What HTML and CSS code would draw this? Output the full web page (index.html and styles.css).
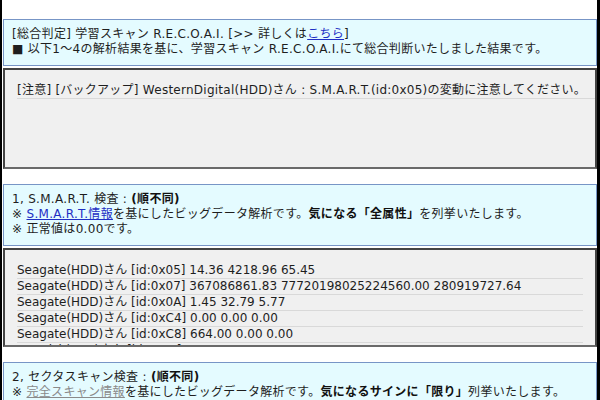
FILE: index.html
```html
<!DOCTYPE html>
<html lang="ja">
<head>
<meta charset="utf-8">
<link rel="stylesheet" href="styles.css">
</head>
<body>
<div class="frame">
  <section class="section">
    <div class="info">
      <div class="line">[総合判定] 学習スキャン R.E.C.O.A.I. [&gt;&gt; 詳しくは<a class="link" href="#">こちら</a>]</div>
      <div class="line">■ 以下1～4の解析結果を基に、学習スキャン R.E.C.O.A.I.にて総合判断いたしました結果です。</div>
    </div>
    <div class="list list-notice">
      <div class="row">[注意] [バックアップ] WesternDigital(HDD)さん : S.M.A.R.T.(id:0x05)の変動に注意してください。</div>
    </div>
  </section>

  <section class="section">
    <div class="info">
      <div class="line">1, S.M.A.R.T. 検査 : <b>(順不同)</b></div>
      <div class="line">※ <a class="link" href="#">S.M.A.R.T.情報</a>を基にしたビッグデータ解析です。<b>気になる「全属性」</b>を列挙いたします。</div>
      <div class="line">※ 正常値は0.00です。</div>
    </div>
    <div class="list list-scroll">
      <div class="row">Seagate(HDD)さん [id:0x05] 14.36 4218.96 65.45</div>
      <div class="row">Seagate(HDD)さん [id:0x07] 367086861.83 77720198025224560.00 280919727.64</div>
      <div class="row">Seagate(HDD)さん [id:0x0A] 1.45 32.79 5.77</div>
      <div class="row">Seagate(HDD)さん [id:0xC4] 0.00 0.00 0.00</div>
      <div class="row">Seagate(HDD)さん [id:0xC8] 664.00 0.00 0.00</div>
      <div class="row">SanDisk(SSD)さん [id:0x05] 0.00 0.00 0.00</div>
    </div>
  </section>

  <section class="section">
    <div class="info">
      <div class="line">2, セクタスキャン検査 : <b>(順不同)</b></div>
      <div class="line">※ <a class="link link-visited" href="#">完全スキャン情報</a>を基にしたビッグデータ解析です。<b>気になるサインに「限り」</b>列挙いたします。</div>
      <div class="line">※ 正常値は0.00です。</div>
    </div>
  </section>
</div>
</body>
</html>
```

FILE: styles.css
```css
html, body {
  margin: 0;
  padding: 0;
  background: #ffffff;
}

body {
  font-family: "DejaVu Sans", "Noto Sans CJK JP", sans-serif;
  font-size: 12px;
  color: #1e1e1e;
}

.frame {
  width: 600px;
  height: 400px;
  box-sizing: border-box;
  border-left: 2px solid #000;
  border-right: 3px solid #000;
  padding: 19px 0 0 1px;
  overflow: hidden;
  display: flex;
  flex-direction: column;
  gap: 15px;
}

.section {
  display: flex;
  flex-direction: column;
  gap: 2px;
}

.info {
  background: #e4fbff;
  border: 1px solid #7795c6;
  padding: 7px 8px 8px;
  letter-spacing: 0.3px;
}

.line {
  line-height: 15px;
  white-space: nowrap;
}

.link {
  color: #1f2fc4;
  text-decoration: underline;
}

.link-visited {
  color: #8a8a8a;
}

b {
  font-weight: bold;
  color: #111;
}

.list {
  height: 101px;
  box-sizing: border-box;
  background: #f0f0f0;
  border: 2px solid #444;
  border-bottom-color: #6a6a6a;
  padding: 13px 0 0 12px;
  overflow: hidden;
}

.list-notice .row {
  letter-spacing: 0.25px;
}

.list-scroll {
  height: 99px;
  padding-right: 12px;
}

.row {
  line-height: 14px;
  padding-bottom: 1px;
  border-bottom: 1px solid #d9d9d9;
  white-space: nowrap;
  overflow: hidden;
}
```
